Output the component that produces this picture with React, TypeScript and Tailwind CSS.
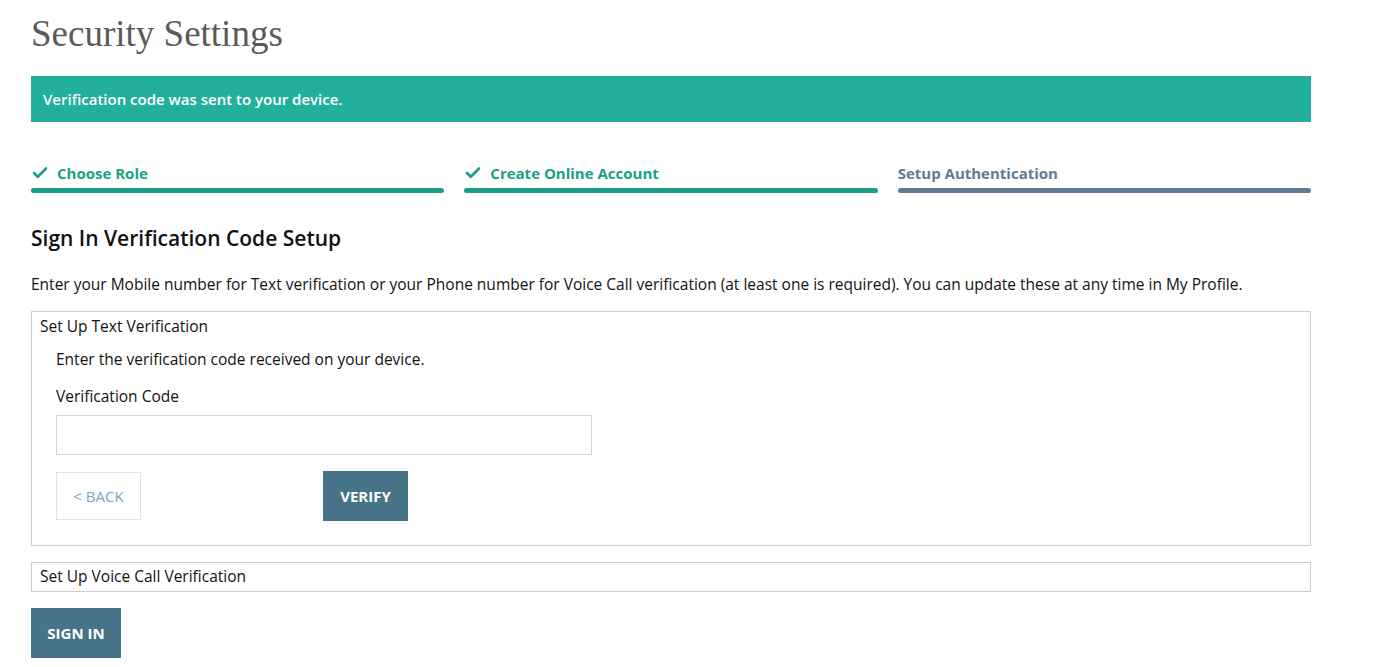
import { Check } from "lucide-react"

const sans = { fontFamily: "'Open Sans', Lato, sans-serif" }

const steps = [
	{ label: "Choose Role", done: true },
	{ label: "Create Online Account", done: true },
	{ label: "Setup Authentication", done: false },
]

export default function App() {
	return (
		<div className="min-h-screen bg-white pl-[31px] pr-[72px] pt-[12px] text-[#111]" style={sans}>
			<h1
				className="text-[37px] leading-[44px] text-[#5a5a5a]"
				style={{ fontFamily: "'Liberation Serif', 'DejaVu Serif', serif" }}
			>
				Security Settings
			</h1>

			<div className="mt-[20px] flex h-[46px] items-center bg-[#22b09b] px-[12px] text-[15px] font-semibold text-white">
				Verification code was sent to your device.
			</div>

			<div className="mt-[39px] grid grid-cols-3 gap-[20px]">
				{steps.map((step) => (
					<div key={step.label} className="flex flex-col">
						<div
							className={`flex h-[24px] items-center gap-[8px] text-[15px] font-bold ${step.done ? "text-[#1b9f84]" : "text-[#5f7a93]"}`}
						>
							{step.done && <Check className="size-[18px]" strokeWidth={3.5} />}
							<span>{step.label}</span>
						</div>
						<div
							className={`mt-[3px] h-[5px] rounded-full ${step.done ? "bg-[#1b9f84]" : "bg-[#5f7a93]"}`}
						/>
					</div>
				))}
			</div>

			<h2 className="mt-[31px] text-[21px] font-semibold leading-[28px]">
				Sign In Verification Code Setup
			</h2>
			<p className="mt-[21px] text-[15.5px] leading-[22px]">
				Enter your Mobile number for Text verification or your Phone number for Voice Call
				verification (at least one is required). You can update these at any time in My
				Profile.
			</p>

			<div className="mt-[16px] border border-[#cccccc] px-[8px] pb-[24px] pt-[3px] text-[15.5px]">
				<div className="leading-[22px]">Set Up Text Verification</div>
				<div className="pl-[16px]">
					<p className="mt-[11px] leading-[22px]">
						Enter the verification code received on your device.
					</p>
					<label className="mt-[15px] block leading-[22px]">Verification Code</label>
					<input className="mt-[8px] block h-[40px] w-[536px] border border-[#d4d4d4] px-[10px] outline-none" />
					<div className="mt-[16px] flex items-center gap-[182px]">
						<button className="h-[48px] w-[85px] border border-[#e2e2e2] text-[15px] text-[#7ea3c4]">
							&lt; BACK
						</button>
						<button className="h-[50px] w-[85px] bg-[#467387] text-[15px] font-bold text-white">
							VERIFY
						</button>
					</div>
				</div>
			</div>

			<div className="mt-[16px] flex h-[30px] items-center border border-[#cccccc] px-[8px] text-[15.5px]">
				Set Up Voice Call Verification
			</div>

			<button className="mt-[16px] h-[50px] w-[90px] bg-[#467387] text-[15px] font-bold text-white">
				SIGN IN
			</button>
		</div>
	)
}
